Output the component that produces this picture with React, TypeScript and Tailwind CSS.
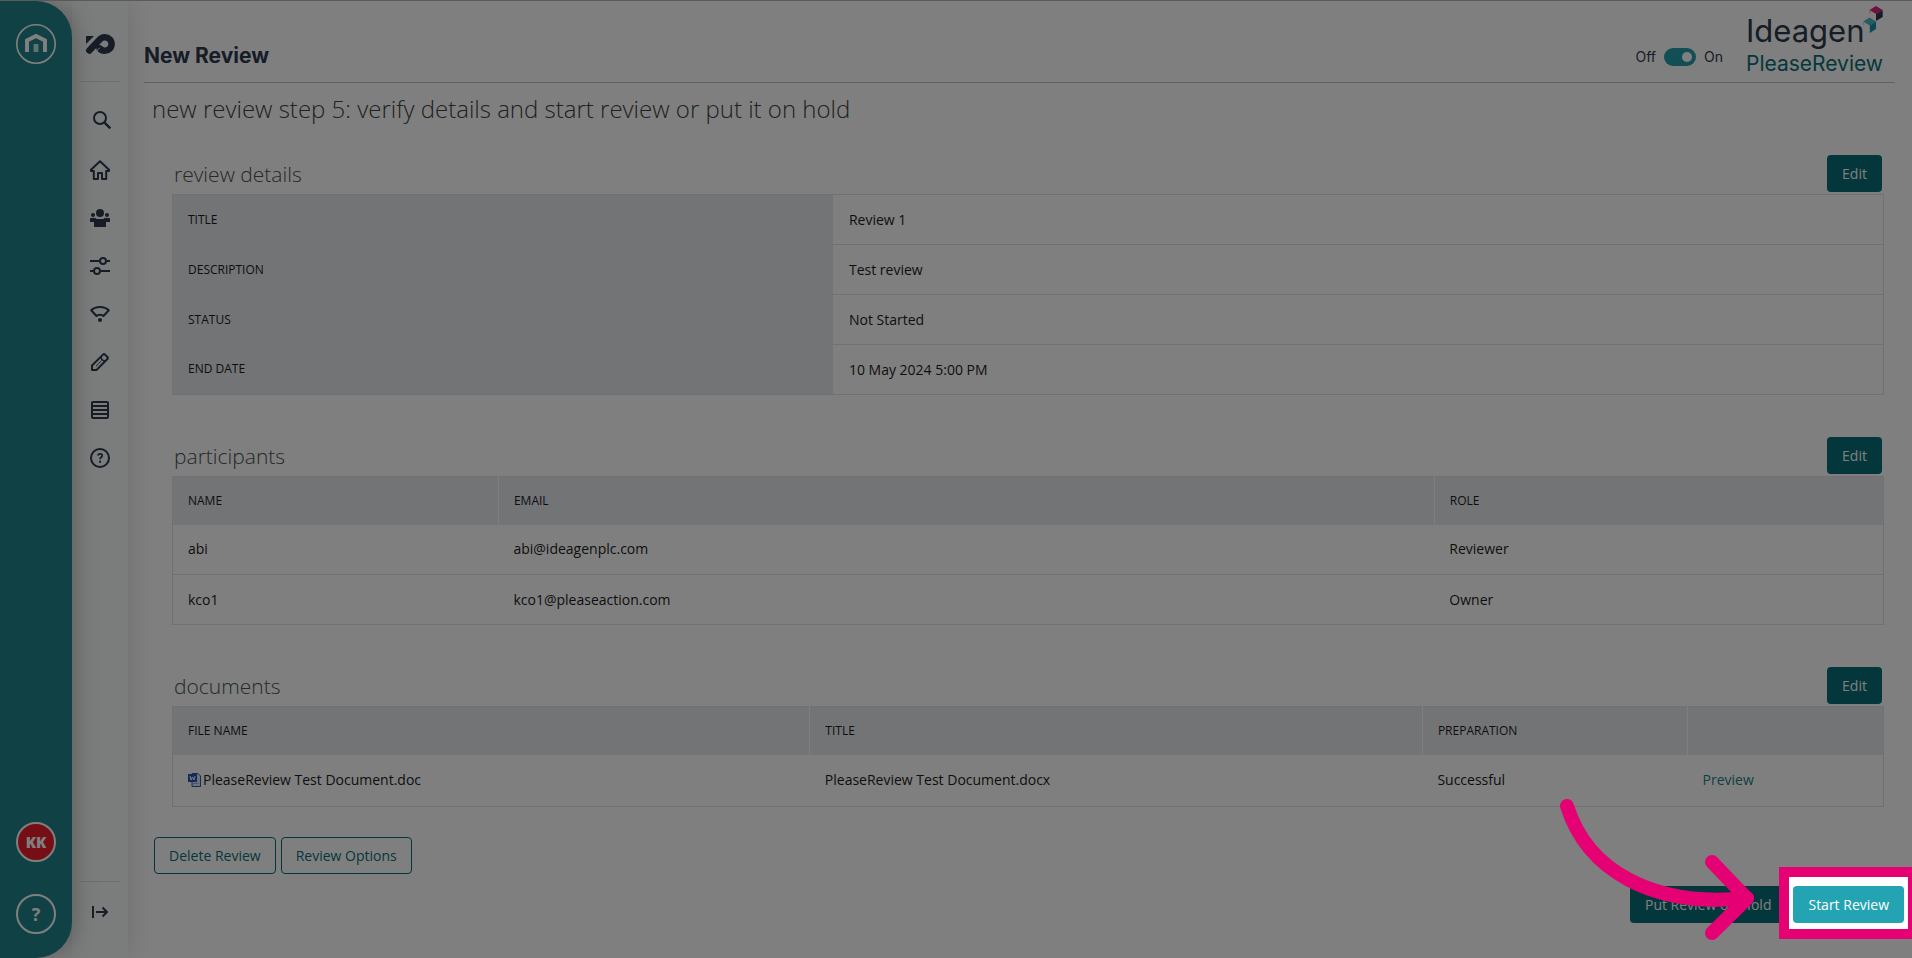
import { useState } from 'react'
import type { ReactNode } from 'react'

const participants = [
  { name: 'abi', email: 'abi@ideagenplc.com', role: 'Reviewer' },
  { name: 'kco1', email: 'kco1@pleaseaction.com', role: 'Owner' },
]

const details = [
  { label: 'Title', value: 'Review 1' },
  { label: 'Description', value: 'Test review' },
  { label: 'Status', value: 'Not Started' },
  { label: 'End date', value: '10 May 2024 5:00 PM' },
]

function Icon({ children }: { children: ReactNode }) {
  return (
    <svg
      viewBox="0 0 20 20"
      className="w-5 h-5 overflow-visible"
      fill="none"
      stroke="currentColor"
      strokeWidth="2"
      strokeLinejoin="round"
      aria-hidden="true"
    >
      {children}
    </svg>
  )
}

const navItems = [
  {
    label: 'Search',
    icon: (
      <Icon>
        <circle cx="10" cy="6" r="6" />
        <path d="M14.300 10.300l6 6" strokeWidth="2.4" />
      </Icon>
    ),
  },
  {
    label: 'Home',
    icon: (
      <Icon>
        <path d="M10 1.2L1 9.8V11h2.8v8H8v-6h4v6h4.200v-8H19V9.800z" />
      </Icon>
    ),
  },
  {
    label: 'Participants',
    icon: (
      <Icon>
        <g fill="currentColor" stroke="none">
          <circle cx="10" cy="5" r="4" />
          <circle cx="3" cy="7" r="2" />
          <circle cx="17" cy="7" r="2" />
          <path d="M0 11a1 1 0 0 1 1-1h4.500l1 1h7l1-1H19a1 1 0 0 1 1 1v3h-4v5H4v-5H0z" />
        </g>
      </Icon>
    ),
  },
  {
    label: 'Settings',
    icon: (
      <Icon>
        <path d="M0 5h9.500M16.500 5H20M0 15h3.500M10.500 15H20" />
        <circle cx="13" cy="5" r="3" />
        <circle cx="7" cy="15" r="3" />
      </Icon>
    ),
  },
  {
    label: 'Status',
    icon: (
      <Icon>
        <path d="M1.200 6.300C5.500 2 14.500 2 18.800 6.300L13.500 12c-1.800-1.800-5.200-1.800-7 0z" />
        <circle cx="10" cy="16" r="2" fill="currentColor" stroke="none" />
      </Icon>
    ),
  },
  {
    label: 'Edit',
    icon: (
      <Icon>
        <path d="M2 18v-4.500L13 2.600q1-1 2 0L17.400 5q1 1 0 2L6.500 18z" />
        <path d="M11 5q.3 3.500 4 4" strokeWidth="1.600" />
        <path d="M6 14.200l5.500-5.400" strokeWidth="1" />
      </Icon>
    ),
  },
  {
    label: 'Reports',
    icon: (
      <Icon>
        <rect x="2" y="2" width="16" height="16" rx="1" />
        <path d="M2 6h16M2 10h16M2 14h16" />
      </Icon>
    ),
  },
  {
    label: 'Help',
    icon: (
      <Icon>
        <circle cx="10" cy="10" r="9" />
        <path d="M7.800 7.600q.5-1.800 2.300-1.800 2.100 0 2.100 1.800 0 1-1.200 1.800-1 .7-1 1.900" strokeWidth="1.800" />
        <path d="M9 12.800h2v2H9z" fill="currentColor" stroke="none" />
      </Icon>
    ),
  },
]

function BrandRail() {
  return (
    <aside className="relative z-20 flex w-[72px] shrink-0 flex-col items-center rounded-r-[36px] bg-[#20848a] pt-[23px] pb-6 text-white shadow-[0_0_24px_rgba(0,0,0,0.3)]">
      <a href="#" aria-label="Hub home">
        <svg viewBox="0 0 40 40" className="w-10 h-10" fill="none" stroke="currentColor">
          <circle cx="20" cy="20" r="19.200" strokeWidth="1.600" />
          <path d="M11 28V16.500l9-4.500 9 4.500V28" strokeWidth="4" />
          <path d="M17.600 28v-8h4.800v8z" fill="#c4e3e4" stroke="none" />
        </svg>
      </a>
      <button className="mt-auto h-10 w-10 rounded-full border-2 border-white bg-[#ed1c2b] text-[15px] font-extrabold">
        KK
      </button>
      <button className="mt-8 h-10 w-10 rounded-full border-2 border-white text-lg font-bold" aria-label="Help">
        ?
      </button>
    </aside>
  )
}

function SideNav() {
  return (
    <nav className="relative z-10 flex w-14 shrink-0 flex-col items-center bg-[#f6faf8] pb-9 text-[#2e3a4e] shadow-[0_0_28px_rgba(0,0,0,0.14)]">
      <a href="#" aria-label="PleaseReview" className="flex h-[81px] w-10 items-start justify-center border-b border-[#dcdfde] pt-8">
        <svg viewBox="0 0 30 22" className="w-[30px] h-[22px]" fill="none" stroke="currentColor">
          <path d="M1 3.500q0-.5.500-.5H9L1 11z" fill="currentColor" stroke="none" />
          <path d="M4.300 17.500L14.700 6.500A6.800 6.800 0 1 1 14.700 15.500" strokeWidth="6.500" strokeLinecap="round" />
          <path d="M9 20.800L14.700 14.800" stroke="#f6faf8" strokeWidth="1" />
        </svg>
      </a>
      <ul className="mt-[30px] flex flex-col gap-7">
        {navItems.map((item) => (
          <li key={item.label} className="h-5">
            <a href="#" aria-label={item.label} className="block">
              {item.icon}
            </a>
          </li>
        ))}
      </ul>
      <div className="mt-auto flex w-10 justify-center border-t border-[#dcdfde] pt-5">
        <button aria-label="Expand menu">
          <Icon>
            <path d="M3 4v12M6 10h11M12.500 5.500L17 10l-4.500 4.500" />
          </Icon>
        </button>
      </div>
    </nav>
  )
}

function Logo() {
  return (
    <div className="relative w-[137px] font-[Inter,sans-serif] leading-none">
      <div className="text-[31px] leading-9 text-[#2e3a4e]">Ideagen</div>
      <div className="text-[21px] leading-[30px] text-[#087078]">PleaseReview</div>
      <svg viewBox="0 0 20 28" className="absolute right-0 -top-2 w-5 h-7">
        <path d="M6.500 5L13 1l6.700 4L13 9z" fill="#e0207f" />
        <path d="M13 9l6.700-4v7L13 16z" fill="#2e3a4e" />
        <path d="M6.500 5v4l1-.6V5.600z" fill="#e9a0c4" />
        <path d="M.3 16.500l6.200-4 6.500 4-6.200 4z" fill="#4fb4c4" />
        <path d="M6.800 20.500l6.200-4V24l-6.200 4z" fill="#1093ad" />
        <path d="M.3 16.500v4l1-.6v-2.800z" fill="#a5d8df" />
      </svg>
    </div>
  )
}

function Section({ title, children }: { title: string; children: ReactNode }) {
  return (
    <section>
      <div className="flex h-[39px] items-start justify-between pr-[2px] pl-[2px]">
        <h2 className="text-[21px] leading-[38px] font-light text-[#4a5252]">{title}</h2>
        <button className="h-[37px] w-[55px] rounded bg-[#086e76] text-sm font-medium text-white">Edit</button>
      </div>
      {children}
    </section>
  )
}

const tableClass = 'w-full table-fixed border-collapse border border-[#e2e3e6] text-left text-sm'
const thClass = 'h-12 border-r border-white px-[15px] text-xs font-normal uppercase last:border-r-0'

export default function App() {
  const [enabled, setEnabled] = useState(true)

  return (
    <div className="relative flex min-h-screen overflow-hidden border-t border-[#5a5a5a] bg-white font-['Open_Sans',sans-serif] text-[#1c1c1c]">
      <BrandRail />
      <SideNav />

      <main className="min-w-0 flex-1">
        {/* Header */}
        <header className="mr-[17px] ml-4 flex h-[82px] justify-between border-b border-[#c4c4c4]">
          <h1 className="pt-10 font-[Inter,sans-serif] text-[21px] leading-[30px] font-bold text-[#2e3a4e]">
            New Review
          </h1>
          <div className="flex pr-3">
            <label className="mt-[47px] mr-[23px] flex h-[18px] items-center gap-2 font-[Inter,sans-serif] text-sm text-[#2e3a4e]">
              Off
              <input
                type="checkbox"
                checked={enabled}
                onChange={() => setEnabled(!enabled)}
                className="peer sr-only"
              />
              <span className="flex h-[18px] w-8 items-center rounded-full bg-gray-400 px-1 peer-checked:justify-end peer-checked:bg-[#259fa9]">
                <span className="h-[10px] w-[10px] rounded-full bg-white" />
              </span>
              On
            </label>
            <div className="pt-3">
              <Logo />
            </div>
          </div>
        </header>

        <p className="mt-2 ml-6 text-2xl leading-9 font-light text-[#3c4444]">
          new review step 5: verify details and start review or put it on hold
        </p>

        {/* Summary tables */}
        <div className="mt-7 mr-7 ml-11 flex flex-col gap-[42px]">
          <Section title="review details">
            <table className={tableClass}>
              <tbody>
                {details.map((row) => (
                  <tr key={row.label}>
                    <th scope="row" className="w-[38.600%] bg-[#e6e8ed] px-[15px] text-xs font-normal uppercase">
                      {row.label}
                    </th>
                    <td className="h-[50px] border-b border-[#e2e3e6] px-4">{row.value}</td>
                  </tr>
                ))}
              </tbody>
            </table>
          </Section>

          <Section title="participants">
            <table className={tableClass}>
              <thead className="bg-[#e6e8ed]">
                <tr>
                  <th className={`${thClass} w-[19.050%]`}>Name</th>
                  <th className={`${thClass} w-[54.700%]`}>Email</th>
                  <th className={thClass}>Role</th>
                </tr>
              </thead>
              <tbody>
                {participants.map((person) => (
                  <tr key={person.name} className="border-b border-[#e2e3e6]">
                    <td className="h-[50px] px-[15px]">{person.name}</td>
                    <td className="h-[50px] px-[15px]">{person.email}</td>
                    <td className="h-[50px] px-[15px]">{person.role}</td>
                  </tr>
                ))}
              </tbody>
            </table>
          </Section>

          <Section title="documents">
            <table className={tableClass}>
              <thead className="bg-[#e6e8ed]">
                <tr>
                  <th className={`${thClass} w-[37.250%]`}>File name</th>
                  <th className={`${thClass} w-[35.800%]`}>Title</th>
                  <th className={`${thClass} w-[15.500%]`}>Preparation</th>
                  <th className={thClass} aria-label="Actions" />
                </tr>
              </thead>
              <tbody>
                <tr className="border-b border-[#e2e3e6]">
                  <td className="h-[52px] px-[15px]">
                    <span className="flex items-center gap-[2px]">
                      <svg viewBox="0 0 13 14" className="w-[13px] h-[14px]" aria-hidden="true">
                        <path d="M4 .5h6L12.500 3v10.500H4z" fill="#dbe6fa" stroke="#34569c" />
                        <path d="M5 10.500h6" stroke="#8fabe0" />
                        <rect x="0" y="1" width="9" height="8" fill="#2a55b5" />
                        <path d="M2 3l1 4 1.500-3L6 7l1-4" fill="none" stroke="#fff" />
                      </svg>
                      PleaseReview Test Document.doc
                    </span>
                  </td>
                  <td className="px-[15px]">PleaseReview Test Document.docx</td>
                  <td className="px-[15px]">Successful</td>
                  <td className="px-[15px]">
                    <a href="#" className="text-[#1b7f87]">
                      Preview
                    </a>
                  </td>
                </tr>
              </tbody>
            </table>
          </Section>
        </div>

        {/* Actions */}
        <div className="mt-[30px] ml-[26px] flex gap-[5px] text-sm text-[#087078]">
          <button className="h-[37px] rounded border border-[#086e76] px-[14px]">Delete Review</button>
          <button className="h-[37px] rounded border border-[#086e76] px-[14px]">Review Options</button>
        </div>
        <div className="mt-3 mr-2 flex justify-end gap-[7px] pb-[35px] text-sm font-medium text-white">
          <button className="h-[37px] rounded bg-[#086e76] px-[15px]">Put Review on Hold</button>
          <div className="relative z-40">
            <div className="absolute -top-[19px] -right-[14px] -bottom-4 -left-[14px] border-[10px] border-[#e50074] bg-white" />
            <svg
              viewBox="0 0 200 150"
              className="pointer-events-none absolute right-[144px] -bottom-6 h-[150px] w-[200px]"
              fill="none"
              stroke="#e50074"
              strokeWidth="14"
              strokeLinecap="round"
              strokeLinejoin="round"
              aria-hidden="true"
            >
              <path d="M7 9C27 73 92 111 187 101" />
              <path d="M152 65l35 36.500-35 34.500" />
            </svg>
            <button className="relative h-[37px] rounded bg-[#24a3b2] px-[15px]">Start Review</button>
          </div>
        </div>
      </main>

      {/* Dimmed backdrop of the guided tour */}
      <div className="pointer-events-none absolute inset-0 z-30 bg-black/50" />
    </div>
  )
}
